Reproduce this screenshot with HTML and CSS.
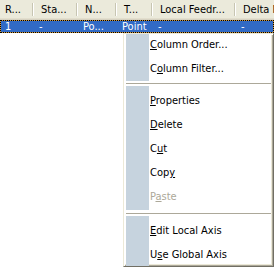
FILE: index.html
```html
<!doctype html>
<html lang="en">
    <head>
        <meta charset="utf-8">
        <title>Points grid</title>
        <link rel="stylesheet" href="styles.css">
    </head>
    <body>
        <div class="grid">
            <div class="head">
                <div class="hcell w1">R...</div>
                <div class="hcell w2 sepl">Sta...</div>
                <div class="hcell w3 sepl">N...</div>
                <div class="hcell w4 sepl">T...</div>
                <div class="hcell w5 sepl">Local Feedr...</div>
                <div class="hcell w6 sepl">Delta N</div>
            </div>
            <div class="line sel">
                <div class="cell w1">1</div>
                <div class="cell w2">-</div>
                <div class="cell w3">Po...</div>
                <div class="cell w4">Point</div>
                <div class="cell w5">-</div>
                <div class="cell w6">-</div>
            </div>
        </div>

        <div class="menu">
            <div class="item top"><span class="strip"></span><span class="label"><u>C</u>olumn Order...</span></div>
            <div class="item"><span class="strip"></span><span class="label">C<u>o</u>lumn Filter...</span></div>
            <div class="sep"><div class="gap"></div></div>
            <div class="item"><span class="strip"></span><span class="label"><u>P</u>roperties</span></div>
            <div class="item"><span class="strip"></span><span class="label"><u>D</u>elete</span></div>
            <div class="item"><span class="strip"></span><span class="label">C<u>u</u>t</span></div>
            <div class="item"><span class="strip"></span><span class="label">Cop<u>y</u></span></div>
            <div class="item off"><span class="strip"></span><span class="label">P<u>a</u>ste</span></div>
            <div class="sep wide"><div class="gap"></div></div>
            <div class="item"><span class="strip"></span><span class="label"><u>E</u>dit Local Axis</span></div>
            <div class="item bottom"><span class="strip"></span><span class="label">U<u>s</u>e Global Axis</span></div>
        </div>
    </body>
</html>
```

FILE: styles.css
```css
/* common */
html, body { font-family: "DejaVu Sans", "Liberation Sans", sans-serif; font-stretch: condensed; font-size: 11px; }
body { margin: 0; background: #fff; color: #000; overflow: hidden; width: 274px; height: 270px; }
u { text-decoration: underline; text-underline-offset: 1px; }

/* grid */
.grid { width: 274px; overflow: hidden; }
.head { display: flex; height: 20px; background: #EBEADB; box-shadow: inset 0 -1px #D6D2C2, inset 0 -2px #E2DECD; white-space: nowrap; }
.hcell { box-sizing: border-box; line-height: 20px; padding-left: 9px; overflow: hidden; flex: none; }
.hcell.w1 { padding-left: 5px; }
.sepl {
    background-image: linear-gradient(#C7C5B2, #C7C5B2), linear-gradient(#fff, #fff);
    background-repeat: no-repeat;
    background-size: 1px 13px, 1px 13px;
    background-position: 0 3px, 1px 3px;
}
.w1 { width: 32px; } .w2 { width: 44px; } .w3 { width: 39px; }
.w4 { width: 36px; } .w5 { width: 83px; } .w6 { width: 40px; flex: 1; }

.line { display: flex; height: 13px; box-sizing: border-box; white-space: nowrap; }
.line.sel { background: #316AC5; color: #fff; border: 1px solid #CE953A; outline: 1px dotted #000; outline-offset: -1px; }
.cell { box-sizing: border-box; line-height: 11px; padding-left: 7px; overflow: hidden; flex: none; }
.cell.w1 { padding-left: 4px; }
.line .w1 { width: 31px; }

/* popup menu */
.menu {
    position: absolute; left: 123px; top: 33px;
    width: 151px; box-sizing: border-box;
    padding: 0 2px 0 2px;
    background: #fff;
    border: 1px solid; border-color: #ECE9D8 #716F64 #716F64 #ECE9D8;
    box-shadow: inset 1px 1px #fff, inset -1px -1px #ACA899, inset -2px -2px #ECE9D8;
}
.item { display: flex; height: 24px; line-height: 24px; }
.item.top, .item.bottom { height: 23px; line-height: 23px; }
.item.top { line-height: 22px; }
.strip { width: 23px; flex: none; background: #C6D3DE; }
.label { padding-left: 1px; white-space: nowrap; }
.item.off .label { color: #ACA899; }

.sep { padding: 0 0 3px; background: linear-gradient(to right, #C6D3DE 23px, #fff 23px); }
.sep.wide { padding: 1px 0 3px; }
.gap { height: 5px; background: #fff linear-gradient(#ACA899, #ACA899) no-repeat 0 2px / 100% 1px; }
.sep.wide .gap { height: 6px; background-position: 0 3px; }
```
